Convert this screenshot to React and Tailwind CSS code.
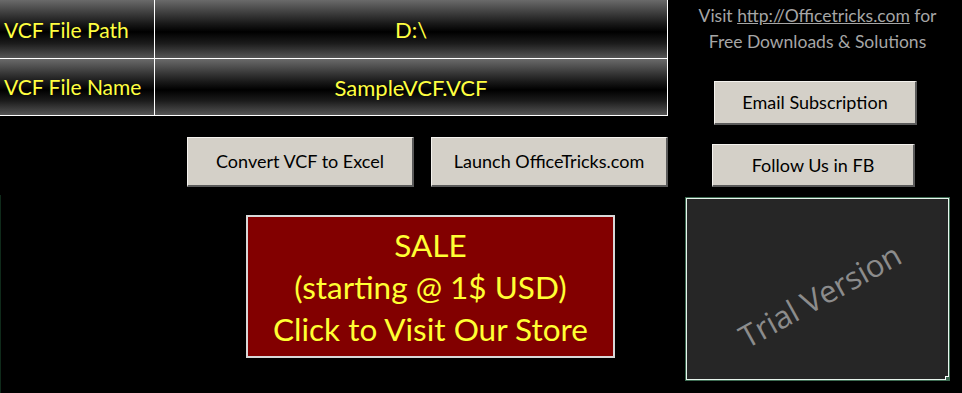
import React from 'react';

const cellBg = "bg-[linear-gradient(to_bottom,#6a6a6a_0%,#1a1a1a_40%,#000_55%,#1c1c1c_75%,#555_100%)]";
const yellow = "text-[#ffff40]";

const GreyButton = ({ label, className = "" }) => (
    <button className={`flex items-center justify-center bg-[#d4d0c8] text-black text-[18px] border-t border-l border-t-[#f4f2ee] border-l-[#f4f2ee] border-r-2 border-b-2 border-r-[#5a5a5a] border-b-[#5a5a5a] ${className}`}>
        {label}
    </button>
);

const App = () => {
    return (
        <div className="w-[962px] h-[393px] bg-black flex overflow-hidden font-['Lato','Liberation_Sans',sans-serif] relative">
            {/* faint sheet edge */}
            <div className="absolute left-0 top-[195px] w-px h-[198px] bg-[#0f2a1a]" />

            {/* Left side */}
            <div className="w-[668px] flex flex-col shrink-0">
                {/* Path / name table */}
                <div className="grid grid-cols-[155px_1fr] grid-rows-[59px_56px] border-r border-b border-white">
                    <div className={`${cellBg} ${yellow} text-[21px] flex items-center pl-[4px] pt-[1px] border-r border-b border-white`}>VCF File Path</div>
                    <div className={`${cellBg} ${yellow} text-[22px] flex items-center justify-center border-b border-white`}>D:\</div>
                    <div className={`${cellBg} ${yellow} text-[21px] flex items-center pl-[4px] border-r border-white`}>VCF File Name</div>
                    <div className={`${cellBg} ${yellow} text-[22px] flex items-center justify-center`}>SampleVCF.VCF</div>
                </div>

                {/* action buttons */}
                <div className="flex gap-[17px] pl-[187px] mt-[21px]">
                    <GreyButton label="Convert VCF to Excel" className="w-[228px] h-[50px]" />
                    <GreyButton label="Launch OfficeTricks.com" className="w-[238px] h-[50px]" />
                </div>

                {/* sale banner */}
                <div className="ml-[246px] mt-[28px] w-[369px] h-[143px] bg-[#820000] border-2 border-[#d8d8d8] flex flex-col items-center justify-center text-[31.5px] leading-[42px] text-[#ffff33]">
                    <span>SALE</span>
                    <span>(starting @ 1$ USD)</span>
                    <span>Click to Visit Our Store</span>
                </div>
            </div>

            {/* Right side */}
            <div className="ml-[17px] w-[265px] flex flex-col items-start">
                <div className="self-stretch mt-[3px] text-[17.5px] leading-[26px] text-[#a6a6a6] text-center">
                    <div>Visit <span className="underline">http://Officetricks.com</span> for</div>
                    <div>Free Downloads &amp; Solutions</div>
                </div>
                <GreyButton label="Email Subscription" className="mt-[26px] ml-[29px] w-[203px] h-[44px]" />
                <GreyButton label="Follow Us in FB" className="mt-[19px] ml-[27px] w-[203px] h-[43px]" />

                {/* trial version panel */}
                <div className="relative mt-[10px] w-[265px] h-[184px] bg-[#262626] border border-[#3d6b52] shadow-[inset_0_0_0_1px_#e8f5ee] flex items-center justify-center overflow-hidden">
                    <span className="-rotate-[29deg] text-[#8c8c8c] text-[31px] font-['Open_Sans','DejaVu_Sans',sans-serif] translate-y-[6px] translate-x-[2px]">Trial Version</span>
                    <div className="absolute right-[-1px] bottom-[-1px] w-[5px] h-[5px] bg-[#3d6b52] border border-white" />
                </div>
            </div>
        </div>
    );
};

export default App;
